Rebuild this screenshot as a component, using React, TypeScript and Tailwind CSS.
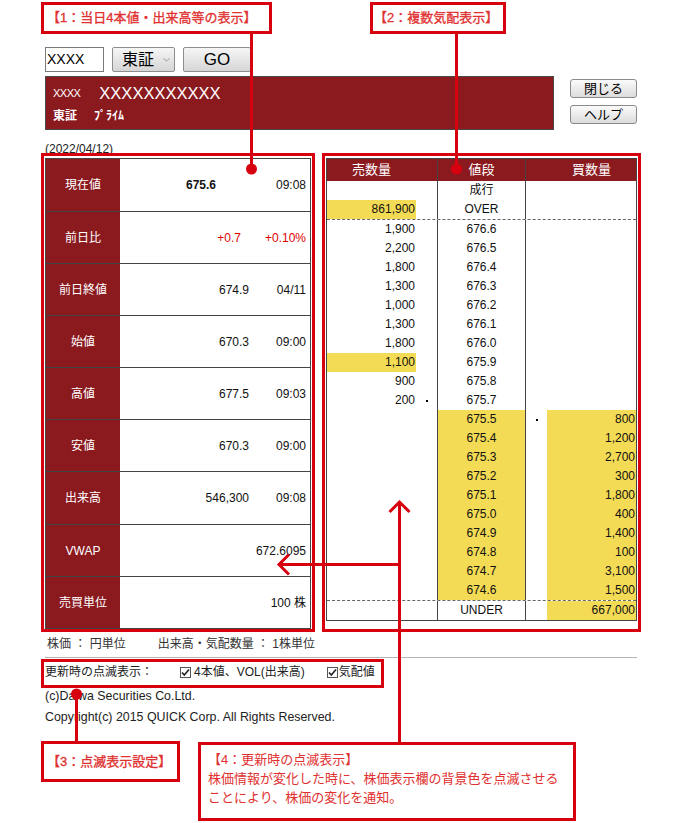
import React from 'react';

type QuoteRow = {
  label: string;
  value: string;
  sub?: string;
  h: string;
  valueCls?: string;
  subCls?: string;
};

const quoteRows: QuoteRow[] = [
  { label: '現在値', value: '675.6', sub: '09:08', h: 'h-[53px]', valueCls: 'font-bold pr-[33px]' },
  { label: '前日比', value: '+0.7', sub: '+0.10%', h: 'h-[52px]', valueCls: 'text-[#e00000] pr-[8px]', subCls: 'text-[#e00000]' },
  { label: '前日終値', value: '674.9', sub: '04/11', h: 'h-[52px]' },
  { label: '始値', value: '670.3', sub: '09:00', h: 'h-[52px]' },
  { label: '高値', value: '677.5', sub: '09:03', h: 'h-[52px]' },
  { label: '安値', value: '670.3', sub: '09:00', h: 'h-[52px]' },
  { label: '出来高', value: '546,300', sub: '09:08', h: 'h-[53px]' },
  { label: 'VWAP', value: '672.6095', h: 'h-[52px]' },
  { label: '売買単位', value: '100 株', h: 'h-[52px]' },
];

type BoardRow = {
  sell?: string;
  price: string;
  buy?: string;
  sellHi?: boolean;
  priceHi?: boolean;
  buyHi?: boolean;
  sellMark?: boolean;
  buyMark?: boolean;
};

const asks: BoardRow[] = [
  { sell: '1,900', price: '676.6' },
  { sell: '2,200', price: '676.5' },
  { sell: '1,800', price: '676.4' },
  { sell: '1,300', price: '676.3' },
  { sell: '1,000', price: '676.2' },
  { sell: '1,300', price: '676.1' },
  { sell: '1,800', price: '676.0' },
  { sell: '1,100', price: '675.9', sellHi: true },
  { sell: '900', price: '675.8' },
  { sell: '200', price: '675.7', sellMark: true },
];

const bids: BoardRow[] = [
  { buy: '800', price: '675.5', buyMark: true },
  { buy: '1,200', price: '675.4' },
  { buy: '2,700', price: '675.3' },
  { buy: '300', price: '675.2' },
  { buy: '1,800', price: '675.1' },
  { buy: '400', price: '675.0' },
  { buy: '1,400', price: '674.9' },
  { buy: '100', price: '674.8' },
  { buy: '3,100', price: '674.7' },
  { buy: '1,500', price: '674.6' },
].map((r) => ({ ...r, priceHi: true, buyHi: true }));

const BoardLine: React.FC<{ row: BoardRow; extra?: string }> = ({ row, extra = 'h-[19px]' }) => (
  <div className={`flex text-[12px] leading-[19px] ${extra}`}>
    <div className={`w-[89px] text-right pr-[1px] ${row.sellHi ? 'bg-[#f4db55]' : ''}`}>{row.sell}</div>
    <div className="w-[22px] border-r border-[#444] flex items-center justify-center">
      {row.sellMark && <span className="w-[2px] h-[2px] bg-black" />}
    </div>
    <div className={`w-[88px] border-r border-[#444] text-center ${row.priceHi ? 'bg-[#f4db55]' : ''}`}>{row.price}</div>
    <div className="w-[21px] flex items-center justify-center">
      {row.buyMark && <span className="w-[2px] h-[2px] bg-black" />}
    </div>
    <div className={`flex-1 text-right pr-[1px] ${row.buyHi ? 'bg-[#f4db55]' : ''}`}>{row.buy}</div>
  </div>
);

const CheckMark = () => (
  <span className="inline-flex w-[11px] h-[11px] border border-[#555] bg-white items-center justify-center">
    <svg width="9" height="9" viewBox="0 0 9 9" fill="none">
      <path d="M1 4.5L3.3 7L8 1.5" stroke="#222" strokeWidth="1.6" />
    </svg>
  </span>
);

const GrayButton: React.FC<{ label: string }> = ({ label }) => (
  <div className="w-[67px] h-[19px] border border-[#8a8a8a] rounded-[3px] bg-linear-to-b from-[#fbfbfb] to-[#dcdcdc] flex items-center justify-center text-[13px] leading-none text-black">
    {label}
  </div>
);

export default function App() {
  return (
    <div className="relative w-[686px] h-[823px] bg-white overflow-hidden font-['Liberation_Sans','Noto_Sans_CJK_JP',sans-serif] text-[#111]">
      <div className="pl-[45px] pt-[47px]">
        {/* search row */}
        <div className="flex items-center h-[25px]">
          <div className="w-[59px] h-[25px] border border-[#7a7a7a] bg-white pl-[1px] text-[14px] leading-[23px] text-black">XXXX</div>
          <div className="ml-[8px] w-[63px] h-[25px] border border-[#8e8e8e] rounded-[2px] bg-linear-to-b from-[#f6f6f6] to-[#d6d6d6] flex items-center pl-[9px] text-[16px] text-black">
            東証
            <svg className="ml-[9px]" width="7" height="4" viewBox="0 0 7 4" fill="none">
              <path d="M0.5 0.5L3.5 3L6.5 0.5" stroke="#999" strokeWidth="1" />
            </svg>
          </div>
          <div className="ml-[8px] w-[68px] h-[25px] border border-[#8e8e8e] rounded-[2px] bg-linear-to-b from-[#f6f6f6] to-[#d6d6d6] flex items-center justify-center text-[17px] text-black">
            GO
          </div>
        </div>

        {/* name bar + buttons */}
        <div className="flex items-start mt-[4px]">
          <div className="w-[509px] h-[54px] border border-[#4a4a4a] bg-[#8b1a1f] text-white pl-[7px] pt-[7px]">
            <div className="flex items-center h-[18px]">
              <span className="text-[11px] tracking-[-0.5px]">XXXX</span>
              <span className="ml-[19px] text-[16.5px]">XXXXXXXXXXX</span>
            </div>
            <div className="flex items-center h-[16px] mt-[6px] font-bold">
              <span className="text-[12px]">東証</span>
              <span className="ml-[17px] text-[12px]">ﾌﾟﾗｲﾑ</span>
            </div>
          </div>
          <div className="ml-[16px] pt-[3px] flex flex-col gap-[7px]">
            <GrayButton label="閉じる" />
            <GrayButton label="ヘルプ" />
          </div>
        </div>

        <div className="h-[28px] pt-[12px] text-[12px] leading-[14px] text-[#222]">(2022/04/12)</div>

        {/* tables */}
        <div className="flex items-start gap-[15px]">
          {/* 4本値 */}
          <div className="w-[266px] border-x border-t border-[#444] text-[12px]">
            {quoteRows.map((r) => (
              <div key={r.label} className={`flex ${r.h} border-b border-[#444]`}>
                <div className="w-[74px] bg-[#8b1a1f] text-white flex items-center justify-center">{r.label}</div>
                <div className="flex-1 flex items-center justify-end pr-[4px]">
                  <span className={`text-right ${r.valueCls ?? ''}`}>{r.value}</span>
                  {r.sub && <span className={`w-[57px] text-right ${r.subCls ?? ''}`}>{r.sub}</span>}
                </div>
              </div>
            ))}
          </div>

          {/* 気配 */}
          <div className="w-[311px] border border-[#444]">
            <div className="flex h-[22px] bg-[#8b1a1f] text-white text-[13px] leading-[22px]">
              <div className="w-[89px] text-center">売数量</div>
              <div className="w-[22px] border-r border-[#444]" />
              <div className="w-[88px] border-r border-[#444] text-center">値段</div>
              <div className="w-[21px]" />
              <div className="flex-1 text-center">買数量</div>
            </div>
            <BoardLine row={{ price: '成行' }} />
            <BoardLine row={{ sell: '861,900', price: 'OVER', sellHi: true }} extra="h-[20px] border-b border-dashed border-[#666]" />
            {asks.map((r) => (
              <BoardLine key={r.price} row={r} />
            ))}
            {bids.map((r) => (
              <BoardLine key={r.price} row={r} />
            ))}
            <BoardLine row={{ price: 'UNDER', buy: '667,000', buyHi: true }} extra="h-[20px] border-t border-dashed border-[#666]" />
          </div>
        </div>

        <div className="pt-[8px] pl-[2px] text-[12px] leading-[14px] text-[#333] flex">
          <span>株価 ： 円単位</span>
          <span className="ml-[32px]">出来高・気配数量 ： 1株単位</span>
        </div>

        <div className="mt-[6px] w-[592px] h-px bg-[#b4b4b4]" />

        <div className="mt-[4px] h-[20px] flex items-center text-[12px] text-[#222]">
          <span>更新時の点滅表示：</span>
          <span className="ml-[27px] flex items-center">
            <CheckMark />
            <span className="ml-[3px]">4本値、VOL(出来高)</span>
          </span>
          <span className="ml-[22px] flex items-center">
            <CheckMark />
            <span className="ml-[1px]">気配値</span>
          </span>
        </div>

        <div className="mt-[4px] text-[12.4px] leading-[21px] text-[#222]">
          <div>(c)Daiwa Securities Co.Ltd.</div>
          <div>Copyright(c) 2015 QUICK Corp. All Rights Reserved.</div>
        </div>
      </div>

      {/* annotation frames */}
      <div className="absolute left-[41px] top-[153px] w-[274px] h-[479px] border-[3px] border-[#d7000f]" />
      <div className="absolute left-[322px] top-[153px] w-[319px] h-[479px] border-[3px] border-[#d7000f]" />
      <div className="absolute left-[41px] top-[659px] w-[343px] h-[29px] border-[3px] border-[#d7000f]" />

      {/* connectors */}
      <svg className="absolute left-0 top-0" width="686" height="823" fill="none" stroke="#d7000f" strokeWidth="3">
        <path d="M251.5 33V169" />
        <path d="M456.5 33V169" />
        <path d="M76.5 694V742" />
        <path d="M399.5 502V743M279 564.5H401" />
        <path d="M389.5 512L399.5 502L409.5 512" />
        <path d="M289 554.5L279 564.5L289 574.5" />
        <circle cx="251.5" cy="169" r="5.5" fill="#d7000f" stroke="none" />
        <circle cx="456.5" cy="169" r="5.5" fill="#d7000f" stroke="none" />
        <circle cx="76.5" cy="694" r="5.5" fill="#d7000f" stroke="none" />
      </svg>

      {/* callouts */}
      <div className="absolute left-[41px] top-[2px] w-[231px] h-[32px] border-[3px] border-[#d7000f] bg-white pl-[3px] flex items-center text-[13px] text-[#e0302f] [-webkit-text-stroke:0.3px_#e0302f]">
        【1：当日4本値・出来高等の表示】
      </div>
      <div className="absolute left-[370px] top-[2px] w-[136px] h-[32px] border-[3px] border-[#d7000f] bg-white pl-[1px] flex items-center text-[13px] text-[#e0302f] [-webkit-text-stroke:0.3px_#e0302f]">
        【2：複数気配表示】
      </div>
      <div className="absolute left-[41px] top-[741px] w-[139px] h-[41px] border-[3px] border-[#d7000f] bg-white pl-[3px] flex items-center text-[13px] text-[#e0302f] [-webkit-text-stroke:0.3px_#e0302f]">
        【3：点滅表示設定】
      </div>
      <div className="absolute left-[198px] top-[742px] w-[378px] h-[79px] border-[3px] border-[#d7000f] bg-white pl-[7px] pt-[5px] text-[13px] leading-[19px] text-[#e0302f]">
        <div>【4：更新時の点滅表示】</div>
        <div>株価情報が変化した時に、株価表示欄の背景色を点滅させる</div>
        <div>ことにより、株価の変化を通知。</div>
      </div>
    </div>
  );
}
